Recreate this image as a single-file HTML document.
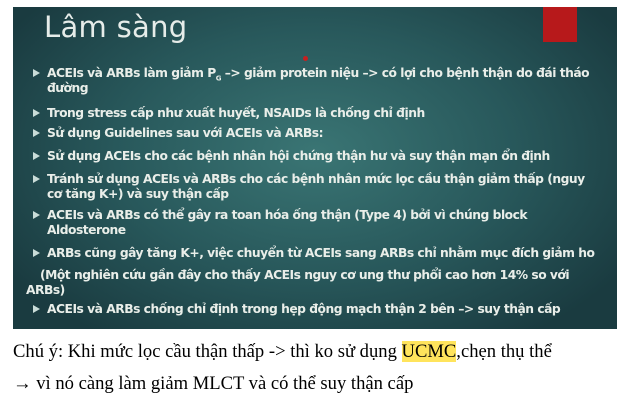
<!DOCTYPE html>
<html><head><meta charset="utf-8"><style>
body{margin:0;width:627px;height:411px;background:#fff;position:relative;overflow:hidden;font-family:"DejaVu Sans","Liberation Sans",sans-serif}
.slide{position:absolute;left:13px;top:7px;width:604px;height:322px;background:radial-gradient(ellipse 60% 70% at 50% 45%,#3a7574 0%,#28585b 55%,#1a3b40 100%)}
.red{position:absolute;left:530px;top:0;width:34px;height:35px;background:#b7191b}
.dot{position:absolute;left:290px;top:49px;width:5px;height:5px;border-radius:50%;background:#c52020}
h1{position:absolute;left:31px;top:3px;margin:0;font-weight:normal;font-size:29px;color:#e6ece9;letter-spacing:0.3px}
.l{position:absolute;left:34px;color:#e9eee9;font-size:12.3px;white-space:nowrap;letter-spacing:-0.5px;font-weight:bold}
.b{position:absolute;left:20px;width:0;height:0;border-left:7px solid #c9dcd8;border-top:4px solid transparent;border-bottom:4px solid transparent}
.t{position:absolute;font-family:"Liberation Serif",serif;font-size:18.6px;color:#000;white-space:nowrap}
.hl{background:#ffe45c}
</style></head><body>
<div class="slide">
<div class="red"></div><div class="dot"></div>
<h1>Lâm sàng</h1>
<div class="b" style="top:62px"></div><div class="l" style="top:59px">ACEIs và ARBs làm giảm P<sub style="font-size:7px">G</sub> –> giảm protein niệu –> có lợi cho bệnh thận do đái tháo</div>
<div class="l" style="top:74px">đường</div>
<div class="b" style="top:102px"></div><div class="l" style="top:99px">Trong stress cấp như xuất huyết, NSAIDs là chống chỉ định</div>
<div class="b" style="top:122px"></div><div class="l" style="top:119px">Sử dụng Guidelines sau với ACEIs và ARBs:</div>
<div class="b" style="top:145px"></div><div class="l" style="top:142px">Sử dụng ACEIs cho các bệnh nhân hội chứng thận hư và suy thận mạn ổn định</div>
<div class="b" style="top:168px"></div><div class="l" style="top:165px">Tránh sử dụng ACEIs và ARBs cho các bệnh nhân mức lọc cầu thận giảm thấp (nguy</div>
<div class="l" style="top:180px">cơ tăng K+) và suy thận cấp</div>
<div class="b" style="top:204px"></div><div class="l" style="top:201px">ACEIs và ARBs có thể gây ra toan hóa ống thận (Type 4) bởi vì chúng block</div>
<div class="l" style="top:216px">Aldosterone</div>
<div class="b" style="top:242px"></div><div class="l" style="top:239px">ARBs cũng gây tăng K+, việc chuyển từ ACEIs sang ARBs chỉ nhằm mục đích giảm ho</div>
<div class="l" style="top:261px;left:27px">(Một nghiên cứu gần đây cho thấy ACEIs nguy cơ ung thư phổi cao hơn 14% so với</div>
<div class="l" style="top:276px;left:13px">ARBs)</div>
<div class="b" style="top:298px"></div><div class="l" style="top:295px">ACEIs và ARBs chống chỉ định trong hẹp động mạch thận 2 bên –> suy thận cấp</div>
</div>
<div class="t" style="left:13px;top:341px">Chú ý: Khi mức lọc cầu thận thấp -&gt; thì ko sử dụng <span class="hl">UCMC</span>,chẹn thụ thể</div>
<div class="t" style="left:13px;top:373px">→ vì nó càng làm giảm MLCT và có thể suy thận cấp</div>
</body></html>
